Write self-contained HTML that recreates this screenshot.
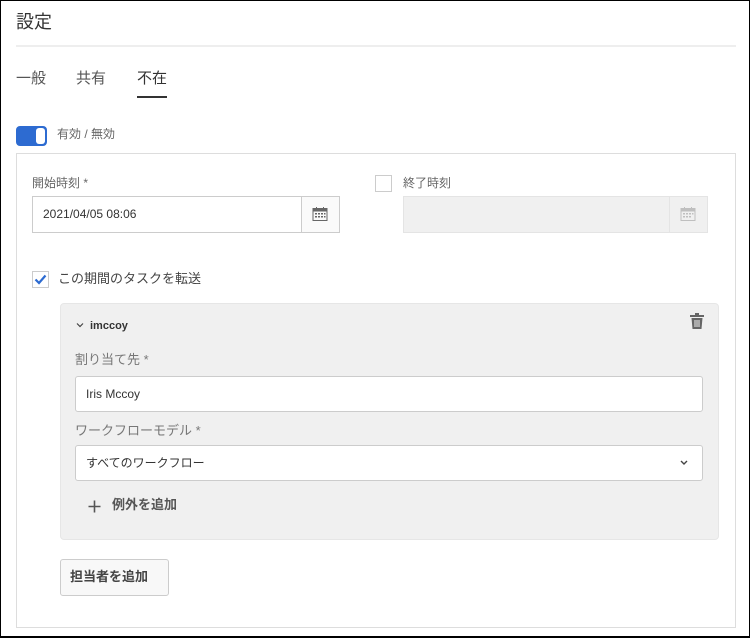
<!DOCTYPE html>
<html><head><meta charset="utf-8"><style>
*{box-sizing:border-box;margin:0;padding:0}
body{width:750px;height:639px;position:relative;background:#fff;font-family:"Liberation Sans","Noto Sans CJK JP",sans-serif;overflow:hidden}
.frame{position:absolute;left:0;top:0;width:750px;height:638px;border:1px solid #000;border-bottom-width:2px}
.a{position:absolute;white-space:nowrap}
.lbl{font-size:12px;color:#666;line-height:14px}
</style></head><body>
<div class="frame"></div>
<div class="a" style="left:16px;top:11px;font-size:18px;color:#333;line-height:22px">設定</div>
<div class="a" style="left:16px;top:45px;width:720px;height:2px;background:#eee"></div>
<div class="a" style="left:16px;top:70px;font-size:15px;color:#555;line-height:18px">一般</div>
<div class="a" style="left:76px;top:70px;font-size:15px;color:#555;line-height:18px">共有</div>
<div class="a" style="left:137px;top:70px;font-size:15px;color:#333;line-height:18px">不在</div>
<div class="a" style="left:137px;top:96px;width:30px;height:2px;background:#333"></div>
<div class="a" style="left:16px;top:126px;width:31px;height:20px;background:#2d6bd1;border-radius:4px"></div>
<div class="a" style="left:36px;top:128px;width:9px;height:16px;background:#fff;border-radius:3px"></div>
<div class="a lbl" style="left:57px;top:127px">有効 / 無効</div>
<div class="a" style="left:16px;top:153px;width:720px;height:475px;border:1px solid #ddd"></div>
<div class="a lbl" style="left:32px;top:176px">開始時刻 *</div>
<div class="a" style="left:32px;top:196px;width:308px;height:37px;border:1px solid #ccc;background:#fff"></div>
<div class="a" style="left:301px;top:197px;width:38px;height:35px;border-left:1px solid #ccc;background:#fafafa"></div>
<div class="a" style="left:43px;top:207px;font-size:12px;color:#333;line-height:14px">2021/04/05 08:06</div>
<svg class="a" style="left:312px;top:206px" width="16" height="16" viewBox="0 0 16 16"><rect x="1" y="2.5" width="14" height="12" fill="none" stroke="#666"/><rect x="1" y="2.5" width="14" height="3" fill="#666"/><line x1="4.5" y1="1" x2="4.5" y2="4" stroke="#666"/><line x1="11.5" y1="1" x2="11.5" y2="4" stroke="#666"/><g fill="#666"><rect x="3" y="7" width="2" height="1.5"/><rect x="6" y="7" width="2" height="1.5"/><rect x="9" y="7" width="2" height="1.5"/><rect x="12" y="7" width="1.5" height="1.5"/><rect x="3" y="10" width="2" height="1.5"/><rect x="6" y="10" width="2" height="1.5"/><rect x="9" y="10" width="2" height="1.5"/><rect x="12" y="10" width="1.5" height="1.5"/></g></svg>
<div class="a" style="left:375px;top:175px;width:17px;height:17px;border:1px solid #ccc;background:#fff"></div>
<div class="a lbl" style="left:403px;top:176px">終了時刻</div>
<div class="a" style="left:403px;top:196px;width:305px;height:37px;border:1px solid #e4e4e4;background:#f0f0f0"></div>
<div class="a" style="left:669px;top:197px;width:1px;height:35px;background:#e4e4e4"></div>
<svg class="a" style="left:680px;top:206px" width="16" height="16" viewBox="0 0 16 16" opacity="0.35"><rect x="1" y="2.5" width="14" height="12" fill="none" stroke="#666"/><rect x="1" y="2.5" width="14" height="3" fill="#666"/><line x1="4.5" y1="1" x2="4.5" y2="4" stroke="#666"/><line x1="11.5" y1="1" x2="11.5" y2="4" stroke="#666"/><g fill="#666"><rect x="3" y="7" width="2" height="1.5"/><rect x="6" y="7" width="2" height="1.5"/><rect x="9" y="7" width="2" height="1.5"/><rect x="12" y="7" width="1.5" height="1.5"/><rect x="3" y="10" width="2" height="1.5"/><rect x="6" y="10" width="2" height="1.5"/><rect x="9" y="10" width="2" height="1.5"/></g></svg>
<div class="a" style="left:32px;top:271px;width:17px;height:17px;border:1px solid #ccc;background:#fff"></div>
<svg class="a" style="left:33px;top:272px" width="15" height="15" viewBox="0 0 15 15"><path d="M2.5 7.5 L6 11 L12.5 3.5" fill="none" stroke="#2d6bd1" stroke-width="2.2"/></svg>
<div class="a" style="left:58px;top:271px;font-size:13px;color:#444;line-height:16px">この期間のタスクを転送</div>
<div class="a" style="left:60px;top:303px;width:659px;height:237px;background:#f0f0f0;border:1px solid #e6e6e6;border-radius:4px"></div>
<svg class="a" style="left:76px;top:322px" width="8" height="6" viewBox="0 0 8 6"><path d="M1 1.5 L4 4.5 L7 1.5" fill="none" stroke="#444" stroke-width="1.2"/></svg>
<div class="a" style="left:90px;top:319px;font-size:11px;font-weight:bold;color:#333;line-height:14px">imccoy</div>
<svg class="a" style="left:689px;top:313px" width="16" height="17" viewBox="0 0 16 17"><rect x="1" y="2" width="14" height="2" fill="#666"/><rect x="6" y="0" width="4" height="2" fill="#666"/><path d="M2.5 5 H13.5 L12.5 16 H3.5 Z" fill="#666"/><g stroke="#f0f0f0" stroke-width="1"><line x1="6" y1="7" x2="6" y2="14"/><line x1="8" y1="7" x2="8" y2="14"/><line x1="10" y1="7" x2="10" y2="14"/></g></svg>
<div class="a" style="left:75px;top:352px;font-size:13px;color:#777;line-height:16px">割り当て先 *</div>
<div class="a" style="left:75px;top:376px;width:628px;height:36px;background:#fff;border:1px solid #ccc;border-radius:3px"></div>
<div class="a" style="left:86px;top:387px;font-size:12px;color:#333;line-height:14px">Iris Mccoy</div>
<div class="a" style="left:75px;top:423px;font-size:13px;color:#777;line-height:16px">ワークフローモデル *</div>
<div class="a" style="left:75px;top:445px;width:628px;height:36px;background:#fff;border:1px solid #ccc;border-radius:3px"></div>
<div class="a" style="left:86px;top:456px;font-size:12px;color:#333;line-height:14px">すべてのワークフロー</div>
<svg class="a" style="left:680px;top:460px" width="8" height="6" viewBox="0 0 8 6"><path d="M1 1 L4 4 L7 1" fill="none" stroke="#444" stroke-width="1.4"/></svg>
<svg class="a" style="left:88px;top:500px" width="13" height="13" viewBox="0 0 13 13"><path d="M6.5 0.5 V12.5 M0.5 6.5 H12.5" stroke="#555" stroke-width="1.6"/></svg>
<div class="a" style="left:112px;top:497px;font-size:13px;font-weight:bold;color:#555;line-height:16px">例外を追加</div>
<div class="a" style="left:60px;top:559px;width:109px;height:37px;background:#f8f8f8;border:1px solid #ccc;border-radius:3px"></div>
<div class="a" style="left:70px;top:569px;font-size:13px;font-weight:bold;color:#444;line-height:16px">担当者を追加</div>
</body></html>
